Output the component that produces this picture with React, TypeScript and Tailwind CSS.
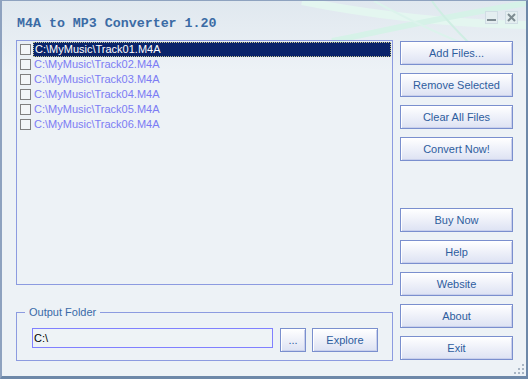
import React from "react";

const files = [
  "C:\\MyMusic\\Track01.M4A",
  "C:\\MyMusic\\Track02.M4A",
  "C:\\MyMusic\\Track03.M4A",
  "C:\\MyMusic\\Track04.M4A",
  "C:\\MyMusic\\Track05.M4A",
  "C:\\MyMusic\\Track06.M4A",
];

function Btn({ label, className = "" }: { label: string; className?: string }) {
  return (
    <button
      className={`h-[24px] border border-[#7a8fce] bg-gradient-to-b from-white to-[#dde2f3] shadow-[inset_1px_1px_0_#ffffff,inset_-1px_-1px_0_#c9d0ec] text-[11px] leading-none text-[#2e5d9e] flex items-center justify-center ${className}`}
    >
      {label}
    </button>
  );
}

function TitleButton({ kind }: { kind: "min" | "close" }) {
  return (
    <div className="w-[13px] h-[13px] border border-[#d0dde4] bg-[#e4eef0] flex items-center justify-center">
      {kind === "min" ? (
        <div className="w-[9px] h-[2px] bg-[#7e8c92] mt-[5px]" />
      ) : (
        <svg width="9" height="9" viewBox="0 0 9 9">
          <path d="M1 1 L8 8 M8 1 L1 8" stroke="#7e8c92" strokeWidth="2" />
        </svg>
      )}
    </div>
  );
}

export default function App() {
  return (
    <div className="w-[528px] h-[379px] relative overflow-hidden flex flex-col bg-[#edf2f6] border-l-2 border-t border-[#8ea2bf] border-r-2 border-b-[3px] border-r-[#6d88a8] border-b-[#6d88a8] font-['Liberation_Sans',Arial,sans-serif]">
      {/* title area backdrop */}
      <div className="absolute inset-x-0 top-0 h-[70px] bg-gradient-to-b from-[#e0e8ef] to-[#edf2f6]" />
      <svg className="absolute left-0 top-0" width="526" height="70" viewBox="0 0 526 70">
        <path d="M300 0 C 360 12, 430 22, 526 24" stroke="#e4f6f0" strokeWidth="8" fill="none" />
        <path d="M330 40 C 390 28, 450 14, 526 2" stroke="#d6f2e8" strokeWidth="6" fill="none" />
        <path d="M430 0 C 440 15, 455 30, 470 45" stroke="#cfeee3" strokeWidth="2" fill="none" />
        <path d="M372 0 C 400 15, 430 30, 460 42" stroke="#dcf3ec" strokeWidth="2" fill="none" />
      </svg>

      <div className="relative h-[39px] flex items-start">
        <div className="pl-[15px] pt-[15px] font-['Liberation_Mono',monospace] font-bold text-[13.3px] leading-[16px] text-[#3b6ba5]">
          M4A to MP3 Converter 1.20
        </div>
        <div className="ml-auto mr-[8px] mt-[10px] flex gap-[7px]">
          <TitleButton kind="min" />
          <TitleButton kind="close" />
        </div>
      </div>

      <div className="relative flex pl-[14px] gap-[7px]">
        <div className="w-[377px] flex flex-col">
          <div className="h-[245px] border border-[#8c9be0] pt-[1px] flex flex-col">
            {files.map((f, i) => (
              <div key={f} className="h-[15px] flex items-center pl-[3px]">
                <div className="w-[11px] h-[11px] border border-[#808080] bg-[#f3f6f8] shrink-0" />
                <div
                  className={`ml-[2px] mr-[1px] flex-1 h-[15px] flex items-center pl-[1px] text-[11px] leading-none ${
                    i === 0
                      ? "bg-[#0a246a] text-white border border-dotted border-[#c8c890]"
                      : "text-[#7c7cf4]"
                  }`}
                >
                  {f}
                </div>
              </div>
            ))}
          </div>

          <div className="relative mt-[27px] h-[49px] border border-[#8c9be0] pt-[15px] pl-[15px] flex">
            <div className="absolute -top-[8px] left-[8px] px-[4px] bg-[#edf2f6] text-[11px] leading-[14px] text-[#3a6aa8]">
              Output Folder
            </div>
            <div className="w-[241px] h-[20px] border border-[#8080ff] bg-[#eef3f6] text-[11px] text-black flex items-center pl-[1px]">
              C:\
            </div>
            <Btn label="..." className="ml-[7px] w-[26px] h-[20px]" />
            <Btn label="Explore" className="ml-[6px] w-[66px] h-[20px]" />
          </div>
        </div>

        <div className="w-[113px] pt-[1px] flex flex-col gap-[8px]">
          <Btn label="Add Files..." />
          <Btn label="Remove Selected" />
          <Btn label="Clear All Files" />
          <Btn label="Convert Now!" className="mb-[39px]" />
          <Btn label="Buy Now" />
          <Btn label="Help" />
          <Btn label="Website" />
          <Btn label="About" />
          <Btn label="Exit" />
        </div>
      </div>

      {/* resize grip */}
      <svg className="absolute right-[1px] bottom-[1px]" width="12" height="12" viewBox="0 0 12 12">
        {[
          [9, 1], [9, 5], [5, 5], [9, 9], [5, 9], [1, 9],
        ].map(([x, y]) => (
          <rect key={`${x}-${y}`} x={x} y={y} width="2" height="2" fill="#a9b6c4" />
        ))}
      </svg>
    </div>
  );
}
